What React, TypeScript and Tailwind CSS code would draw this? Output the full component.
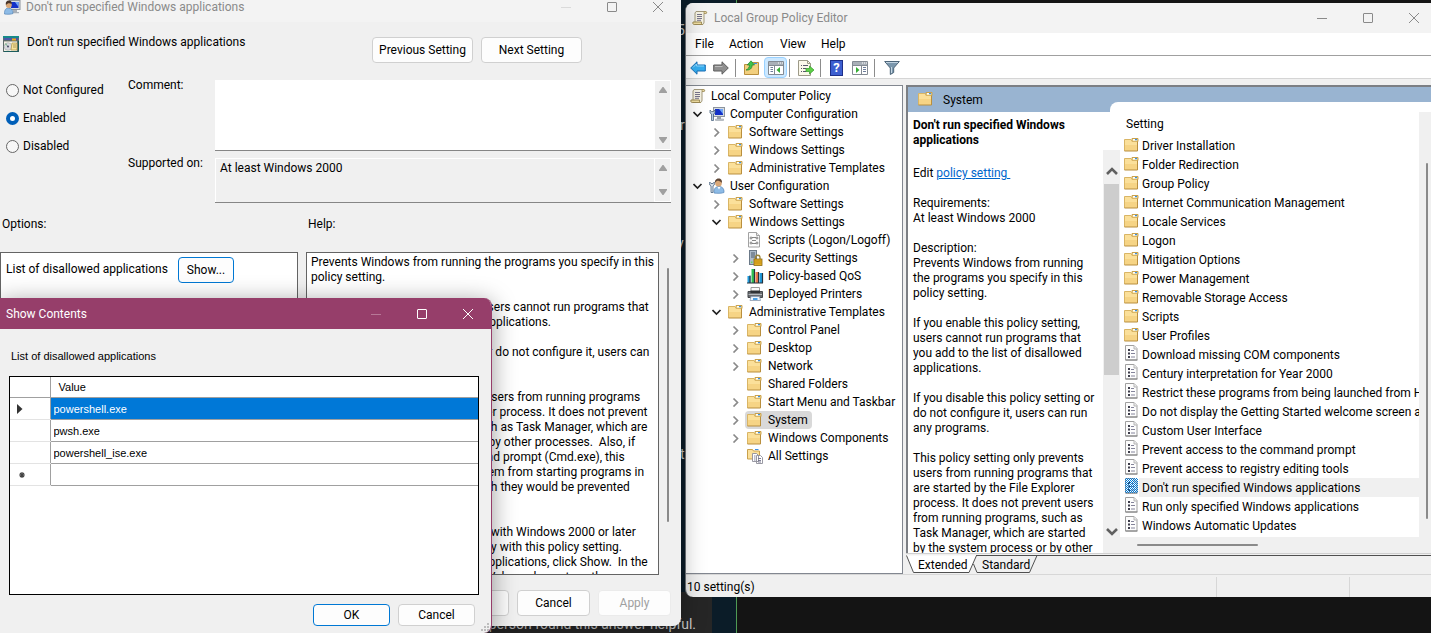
import type { ReactNode } from "react";

type IconProps = { className?: string };

function FolderIcon({ className = "" }: IconProps) {
  return (
    <svg className={`shrink-0 ${className}`} width="15" height="15" viewBox="0 1 15 15" aria-hidden="true">
      <path d="M8 1.500h6v3H8z" fill="#f3d98c" stroke="#c9a14c" strokeWidth="1" />
      <path d="M9 2h4v1.500H9z" fill="#fff" />
      <path d="M11 2h2v1.200h-2z" fill="#3b8ee0" />
      <path d="M.5 2.500h6.500l1 2h5.500v9.500H.5z" fill="#fbe09a" />
      <path d="M.5 8h13v6H.5z" fill="#f3cf7c" opacity=".7" />
      <path d="M.5 14V2.500h6.500l1 2h5.500" fill="none" stroke="#d9b565" />
      <path d="M.5 14h13V4.500" fill="none" stroke="#b98f3e" />
    </svg>
  );
}

function ScrollIcon() {
  return (
    <svg className="shrink-0" width="16" height="16" viewBox="0 0 16 16" aria-hidden="true">
      <path d="M4 1.500h9.500c1.200 0 1.500 2 .2 2H12v8.500c0 1.500-.7 2.500-2 2.500H3V3z" fill="#f5f2e4" stroke="#a39a7c" />
      <path d="M1 12h8.500c-.3 1.400.2 2.500 1 2.500H2.200C.8 14.500.6 13 1 12z" fill="#f1dfa2" stroke="#9c8a55" />
      <path d="M12 1.500h2c1 .3.900 2-.2 2H12z" fill="#e9d9a4" stroke="#9c8a55" strokeWidth=".7" />
      <path d="M5 4.500h5M5 6.500h5M5 8.500h5M5 10.300h4" stroke="#78748c" />
    </svg>
  );
}

function ComputerIcon() {
  return (
    <svg className="shrink-0" width="16" height="16" viewBox="0 0 16 16" aria-hidden="true">
      <rect x="4.500" y="1.500" width="11" height="9" fill="#d7dce2" stroke="#8c949e" />
      <rect x="6" y="3" width="8" height="6" fill="#1230c8" />
      <path d="M10 3h4v5z" fill="#6fa4f5" />
      <path d="M8 11h4v2H8z" fill="#9aa2ab" />
      <path d="M6.500 13h8v1.500h-8z" fill="#c6cbd1" stroke="#8c949e" strokeWidth=".5" />
      <path d="M1 4v3l1.500 1v6.500h2V8L6 7V4L4.500 5.500h-2z" fill="#b9cbe0" stroke="#4d6480" strokeWidth=".8" />
    </svg>
  );
}

function UserIcon() {
  return (
    <svg className="shrink-0" width="16" height="16" viewBox="0 0 16 16" aria-hidden="true">
      <path d="M5 15c-.5-4 1.500-6.500 5-6.500s5.300 2.500 5 6c-2.500 1-7.500 1-10 .5z" fill="#8dbbe6" stroke="#5685b8" strokeWidth=".7" />
      <path d="M8.500 9l1.500 2.500L11.500 9z" fill="#fff" />
      <circle cx="9.500" cy="5.200" r="3.300" fill="#d9a777" />
      <path d="M6 5C5.500 2 7.500.500 9.500.500c2.500 0 4 1.800 3.300 4.500-1-1.500-3-2.500-4-2.200C7.500 3 6.700 3.800 6 5z" fill="#5d4534" />
      <path d="M.7 4v3L2 8v6.500h2V8l1.300-1V4L4 5.500H2z" fill="#d5dfea" stroke="#4d6480" strokeWidth=".8" />
    </svg>
  );
}

function UserComputerIcon() {
  return (
    <svg className="shrink-0" width="17" height="16" viewBox="0 0 17 16" aria-hidden="true">
      <rect x="5.500" y="1.500" width="10.500" height="9" fill="#d7dce2" stroke="#8c949e" />
      <rect x="7" y="3" width="7.500" height="6" fill="#1230c8" />
      <path d="M11 3h3.500v5z" fill="#6fa4f5" />
      <path d="M9 11h4v2H9zM8 13h7v1.200H8z" fill="#a9b0b8" />
      <path d="M.5 15c-.3-4 1.500-6 4-6s4.500 2 4.500 5.500C7 15.400 3 15.400.5 15z" fill="#8dbbe6" stroke="#5685b8" strokeWidth=".7" />
      <circle cx="4.800" cy="6" r="3" fill="#d9a777" />
      <path d="M2 6c-.8-3 .8-4.500 3-4.500S8.300 3.500 7.500 5C5.500 3.500 3.500 4 2 6z" fill="#4a3528" />
    </svg>
  );
}

function ProgramsIcon() {
  return (
    <svg className="shrink-0" width="16" height="16" viewBox="0 0 16 16" aria-hidden="true">
      <rect width="16" height="16" fill="#5f6b6b" />
      <rect width="16" height="2" fill="#168a8a" />
      <rect x="1" y="2" width="14" height="2" fill="#4a58a8" />
      <rect x="9" y="2.500" width="4" height="2" fill="#f0a818" />
      <rect x="1" y="5" width="13" height="10" fill="#f4f1e4" />
      <path d="M1 5.500h13" stroke="#b9b9b0" />
      <circle cx="5" cy="10.500" r="3.800" fill="#d8d8de" stroke="#98a0a0" strokeWidth=".5" />
      <path d="M5 10.500L2 8.500l1-1.500z" fill="#7db88f" />
      <circle cx="5" cy="10.500" r="1" fill="#474b66" />
      <path d="M9 7h5v7H8z" fill="#f8e29b" stroke="#ad9345" strokeWidth=".7" />
      <path d="M10 9h3M10 11h3" stroke="#9d8a4b" strokeWidth=".8" />
      <path d="M15.500 5v10.500H1" fill="none" stroke="#1c5d5d" />
    </svg>
  );
}

function ScriptIcon() {
  return (
    <svg className="shrink-0" width="16" height="16" viewBox="0 0 16 16" aria-hidden="true">
      <path d="M1.500.500h8l3 3v11.500h-11z" fill="#fcfcfc" stroke="#a2a2a2" />
      <path d="M9.500.500v3h3" fill="#e8e8e8" stroke="#a2a2a2" />
      <path d="M5 5.500h4M5 8.500h4M5 11.500h4" fill="none" stroke="#888" />
      <circle cx="4" cy="6" r="1" fill="none" stroke="#666" strokeWidth=".8" />
      <circle cx="10" cy="6" r="1" fill="none" stroke="#666" strokeWidth=".8" />
      <circle cx="4" cy="11" r="1" fill="none" stroke="#666" strokeWidth=".8" />
      <circle cx="10" cy="11" r="1" fill="none" stroke="#666" strokeWidth=".8" />
    </svg>
  );
}

function SecurityIcon() {
  return (
    <svg className="shrink-0" width="16" height="16" viewBox="0 0 16 16" aria-hidden="true">
      <rect x="2.500" y=".500" width="7" height="14" fill="#aebccb" stroke="#6b7988" />
      <path d="M4 3h4M4 5h4M4 7h4" stroke="#4c5a6a" />
      <rect x="4" y="11.500" width="1.500" height="1.500" fill="#62d862" />
      <path d="M8.500 9V7.500a2.200 2.200 0 0 1 4.500 0V9" fill="none" stroke="#98833c" strokeWidth="1.300" />
      <rect x="7" y="9" width="8" height="6.500" fill="#e2ad25" stroke="#8c6a14" strokeWidth=".8" />
      <path d="M7.500 11h7M7.500 13h7" stroke="#b8860b" strokeWidth=".7" />
    </svg>
  );
}

function QosIcon() {
  return (
    <svg className="shrink-0" width="17" height="16" viewBox="0 0 17 16" aria-hidden="true">
      <path d="M.5 8h3v7h-3zM12.500 5h3v10h-3z" fill="#1f9bdd" />
      <path d="M4.500 1h3.500v14H4.500z" fill="#2fbf52" />
      <path d="M8.500 4h3.500v11H8.500z" fill="#ef7b4d" />
      <path d="M3 7.500V15M7.500 1v14M11.500 4v11M15.500 5v10M0 15h16" stroke="#26323c" strokeWidth="1.200" />
    </svg>
  );
}

function PrinterIcon() {
  return (
    <svg className="shrink-0" width="17" height="16" viewBox="0 0 17 16" aria-hidden="true">
      <path d="M4 1.500h8.500V6H4z" fill="#fafafa" stroke="#9c9c9c" />
      <path d="M1 5.500h14.500v6H1z" fill="#696c70" stroke="#45484c" />
      <path d="M3.500 4.500H13V7H3.500z" fill="#2f3235" />
      <path d="M1.500 8.500h13.500" stroke="#b4b8bc" />
      <path d="M4 10.500h8.500l1 4H3z" fill="#eef6fd" stroke="#8c9bb0" strokeWidth=".8" />
      <path d="M6 12h4.500v2H6z" fill="#4aa0e6" />
    </svg>
  );
}

function AllSettingsIcon() {
  return (
    <svg className="shrink-0" width="17" height="16" viewBox="0 0 17 16" aria-hidden="true">
      <path d="M.5 1.500h5l1 1.500h6v8H.5z" fill="#fbe09a" stroke="#c9a14c" />
      <path d="M8 1.500h3.500" stroke="#3b8ee0" />
      <path d="M5.500 5.500h4l2 2v6h-6zM9.500 7.500h4l2 2v6h-6z" fill="#fff" stroke="#8e8e9a" strokeWidth=".9" />
      <path d="M11 10.500h3M11 12.500h3M11 14h3M7 8h1.500M7 10h1.500M7 12h1.500" stroke="#70718a" strokeWidth=".9" />
    </svg>
  );
}

function PolicyIcon({ selected = false }: { selected?: boolean }) {
  return (
    <svg className="shrink-0" width="14" height="16" viewBox="0 0 14 16" aria-hidden="true">
      <path d="M1.500.500h8.500l3 3v11.500H1.500z" fill="#fdfdfd" stroke="#a0a0a0" />
      <path d="M10 .500V4h3" fill="#eee" stroke="#b5b5b5" />
      <path d="M1.500 15H13.500" stroke="#7d7d7d" />
      <path d="M4 4h2v2H4zM4 7.500h2v2H4zM4 11h2v2H4z" fill="#3d3d4a" />
      <path d="M7 5.500h3M7 8.500h4M7 12h4" stroke="#84849a" />
      {selected && (
        <>
          <defs>
            <pattern id="dither" width="2" height="2" patternUnits="userSpaceOnUse">
              <path d="M0 0h1v1H0zM1 1h1v1H1z" fill="#0078d7" shapeRendering="crispEdges" />
            </pattern>
          </defs>
          <rect x="1" width="13" height="15" fill="url(#dither)" />
        </>
      )}
    </svg>
  );
}

function Chevron({ open }: { open: boolean }) {
  return open ? (
    <svg width="10" height="10" viewBox="0 0 10 10" aria-hidden="true">
      <path d="M.5 3l4 4 4-4" fill="none" stroke="#222" strokeWidth="1.700" />
    </svg>
  ) : (
    <svg width="10" height="10" viewBox="0 0 10 10" aria-hidden="true">
      <path d="M2.500 1.500l4 4-4 4" fill="none" stroke="#8a8a8a" strokeWidth="1.700" />
    </svg>
  );
}

function CaptionButtons({ stroke, faint }: { stroke: string; faint: string }) {
  return (
    <div className="flex">
      <button aria-label="Minimize" className="flex w-[46px] items-center justify-center">
        <svg width="10" height="10" viewBox="0 0 10 10"><path d="M0 5.500h10" stroke={faint} /></svg>
      </button>
      <button aria-label="Maximize" className="flex w-[46px] items-center justify-center">
        <svg width="10" height="10" viewBox="0 0 10 10"><rect x=".5" y=".5" width="9" height="9" rx=".5" fill="none" stroke={stroke} /></svg>
      </button>
      <button aria-label="Close" className="flex w-[46px] items-center justify-center">
        <svg width="10" height="10" viewBox="0 0 10 10"><path d="M0 0l10 10M10 0L0 10" stroke={stroke} /></svg>
      </button>
    </div>
  );
}

function PushButton({ children, className = "", ...rest }: { children: ReactNode; className?: string; disabled?: boolean }) {
  return (
    <button {...rest} className={`rounded border bg-[#fdfdfd] text-center ${className}`}>
      {children}
    </button>
  );
}

function ScrollStrip() {
  return (
    <div className="flex w-[17px] shrink-0 flex-col items-center justify-between border border-white bg-[#f0f0f0] py-1.5">
      <svg width="8" height="6" viewBox="0 0 8 6" aria-hidden="true"><path d="M3.500 0h1L8 5v1H0V5z" fill="#a0a0a0" /></svg>
      <svg width="8" height="6" viewBox="0 0 8 6" aria-hidden="true"><path d="M3.500 6h1L8 1V0H0v1z" fill="#a0a0a0" /></svg>
    </div>
  );
}

type Node = { label: string; level: number; icon: ReactNode; open?: boolean; selected?: boolean };

const tree: Node[] = [
  { label: "Computer Configuration", level: 0, icon: <ComputerIcon />, open: true },
  { label: "Software Settings", level: 1, icon: <FolderIcon />, open: false },
  { label: "Windows Settings", level: 1, icon: <FolderIcon />, open: false },
  { label: "Administrative Templates", level: 1, icon: <FolderIcon />, open: false },
  { label: "User Configuration", level: 0, icon: <UserIcon />, open: true },
  { label: "Software Settings", level: 1, icon: <FolderIcon />, open: false },
  { label: "Windows Settings", level: 1, icon: <FolderIcon />, open: true },
  { label: "Scripts (Logon/Logoff)", level: 2, icon: <ScriptIcon /> },
  { label: "Security Settings", level: 2, icon: <SecurityIcon />, open: false },
  { label: "Policy-based QoS", level: 2, icon: <QosIcon />, open: false },
  { label: "Deployed Printers", level: 2, icon: <PrinterIcon />, open: false },
  { label: "Administrative Templates", level: 1, icon: <FolderIcon />, open: true },
  { label: "Control Panel", level: 2, icon: <FolderIcon />, open: false },
  { label: "Desktop", level: 2, icon: <FolderIcon />, open: false },
  { label: "Network", level: 2, icon: <FolderIcon />, open: false },
  { label: "Shared Folders", level: 2, icon: <FolderIcon /> },
  { label: "Start Menu and Taskbar", level: 2, icon: <FolderIcon />, open: false },
  { label: "System", level: 2, icon: <FolderIcon />, open: false, selected: true },
  { label: "Windows Components", level: 2, icon: <FolderIcon />, open: false },
  { label: "All Settings", level: 2, icon: <AllSettingsIcon /> },
];

const indent = ["pl-[7px]", "pl-[26px]", "pl-[45px]"];

const folders = [
  "Driver Installation",
  "Folder Redirection",
  "Group Policy",
  "Internet Communication Management",
  "Locale Services",
  "Logon",
  "Mitigation Options",
  "Power Management",
  "Removable Storage Access",
  "Scripts",
  "User Profiles",
];

const policies = [
  "Download missing COM components",
  "Century interpretation for Year 2000",
  "Restrict these programs from being launched from Help",
  "Do not display the Getting Started welcome screen at logon",
  "Custom User Interface",
  "Prevent access to the command prompt",
  "Prevent access to registry editing tools",
  "Don't run specified Windows applications",
  "Run only specified Windows applications",
  "Windows Automatic Updates",
];

const help = [
  "Prevents Windows from running the programs you specify in this",
  "policy setting.",
  "",
  "If you enable this policy setting, users cannot run programs that",
  "you add to the list of disallowed applications.",
  "",
  "If you disable this policy setting or do not configure it, users can",
  "run any programs.",
  "",
  "This policy setting only prevents users from running programs",
  "that are started by the File Explorer process. It does not prevent",
  "users from running programs, such as Task Manager, which are",
  "started by the system process or by other processes.  Also, if",
  "users have access to the command prompt (Cmd.exe), this",
  "policy setting does not prevent them from starting programs in",
  "the command window even though they would be prevented",
  "from doing so in File Explorer.",
  "",
  "Note: Non-Microsoft applications with Windows 2000 or later",
  "certification are required to comply with this policy setting.",
  "Note: To create a list of allowed applications, click Show.  In the",
  "Show Contents dialog box, in the Value column, type the",
].join("\n");

const description = [
  "Requirements:",
  "At least Windows 2000",
  "",
  "Description:",
  "Prevents Windows from running",
  "the programs you specify in this",
  "policy setting.",
  "",
  "If you enable this policy setting,",
  "users cannot run programs that",
  "you add to the list of disallowed",
  "applications.",
  "",
  "If you disable this policy setting or",
  "do not configure it, users can run",
  "any programs.",
  "",
  "This policy setting only prevents",
  "users from running programs that",
  "are started by the File Explorer",
  "process. It does not prevent users",
  "from running programs, such as",
  "Task Manager, which are started",
  "by the system process or by other",
].join("\n");

function Separator() {
  return <span className="h-[18px] w-px bg-[#8c8c8c]" />;
}

function Toolbar() {
  return (
    <div className="flex h-[23px] shrink-0 items-center border-b border-[#d5d5d5] bg-white pl-1 pt-px">
      <button aria-label="Back" className="w-[23px]">
        <svg width="16" height="14" viewBox="0 0 16 14"><path d="M.7 7L7 .8V4h8.300v6H7v3.200z" fill="#35aef0" stroke="#1a6fb5" /><path d="M3 6.500L6.500 3v2H14" fill="none" stroke="#8fd6fb" /></svg>
      </button>
      <button aria-label="Forward" className="w-[22px]">
        <svg width="16" height="14" viewBox="0 0 16 14"><path d="M15.300 7L9 .8V4H.7v6H9v3.200z" fill="#8f8f8f" stroke="#5c5c5c" /><path d="M2 5.500h7.500" stroke="#bdbdbd" /></svg>
      </button>
      <Separator />
      <button aria-label="Up one level" className="ml-2 w-[20px]">
        <svg width="15" height="16" viewBox="0 0 15 16"><path d="M.5 4.500h7l1-2h6v12H.5z" fill="#f2cf7e" stroke="#b98f3e" /><path d="M10 3.500h3" stroke="#3b8ee0" /><path d="M2 10c2-1 3.500-2.500 3.500-5H3.200L7 .8 10.500 5H8.200c0 3.500-2.500 5.500-6.200 5z" fill="#3fc24a" stroke="#23842c" strokeWidth=".7" /></svg>
      </button>
      <button aria-label="Show or hide console tree" className="flex h-[21px] w-[23px] items-center justify-center rounded-sm border border-[#99d1ff] bg-[#cce8ff]">
        <svg width="16" height="14" viewBox="0 0 16 14"><path d="M.5.500h15v13H.5z" fill="#fff" stroke="#838a93" /><path d="M1 1h14v3H1z" fill="#a9b0b8" /><path d="M10 2h1M12 2h1M14 2h1" stroke="#fff" /><path d="M6.500 4v9M1 4.500h14" stroke="#838a93" /><path d="M2.500 6.500h2.500M2.500 8.500h2.500M2.500 10.500h2.500" stroke="#6d7d9b" /><path d="M12 6v6L8.500 9z" fill="#35ad35" /></svg>
      </button>
      <span className="w-[2px]" />
      <Separator />
      <button aria-label="Export list" className="ml-2 w-[22px]">
        <svg width="17" height="16" viewBox="0 0 17 16"><path d="M.5.500h9l3 3v12H.5z" fill="#fbf8ea" stroke="#9d9a88" /><path d="M9.500.500v3h3" fill="none" stroke="#9d9a88" /><path d="M3 5.500h1M5 5.500h5M3 8.500h1M5 8.500h3M3 11.500h1M5 11.500h3" stroke="#56566a" /><path d="M8 8.500h3.500V6L16 10l-4.500 4v-2.500H8z" fill="#5fd048" stroke="#2f9a26" strokeWidth=".7" /></svg>
      </button>
      <Separator />
      <button aria-label="Help" className="ml-[9px] flex h-[16px] w-[13px] items-center justify-center border border-[#1d2f8a] bg-[#3d5fd0] text-[13px] font-bold leading-[14px] text-white">
        ?
      </button>
      <button aria-label="Show or hide action pane" className="ml-[9px] w-[22px]">
        <svg width="16" height="14" viewBox="0 0 16 14"><path d="M.5.500h15v13H.5z" fill="#fff" stroke="#838a93" /><path d="M1 1h14v3H1z" fill="#a9b0b8" /><path d="M10 2h1M12 2h1M14 2h1" stroke="#fff" /><path d="M9.500 4v9M1 4.500h14" stroke="#838a93" /><path d="M11 6.500h3M11 8.500h3M11 10.500h3" stroke="#6d7d9b" /><path d="M4 6v6l3.500-3z" fill="#35ad35" /></svg>
      </button>
      <Separator />
      <button aria-label="Filter" className="ml-[9px]">
        <svg width="16" height="15" viewBox="0 0 16 15"><path d="M.7 1.500h14.600L9.700 8v4.500L6.300 14.500V8z" fill="#7b97ad" stroke="#4c6478" /><path d="M2 2.500h12" stroke="#c0d2e0" /><path d="M7.500 7v6" stroke="#c7d8e5" /></svg>
      </button>
    </div>
  );
}

function PolicyEditorWindow() {
  return (
    <section aria-label="Local Group Policy Editor" className="absolute bottom-9 left-[685px] right-0 top-[3px] flex flex-col overflow-hidden rounded-l-lg border-l border-[#70757a] bg-[#f0f0f0]">
      <header className="flex h-[30px] shrink-0 justify-between bg-[#f3f3f3]">
        <div className="flex items-center gap-1.5 pl-1.5 text-[#8a8a8a]">
          <ScrollIcon />
          <h1>Local Group Policy Editor</h1>
        </div>
        <div className="-mr-1.5 flex">
          <CaptionButtons stroke="#8a8a8a" faint="#8a8a8a" />
        </div>
      </header>
      <nav className="flex h-[23px] shrink-0 items-center border-b border-[#a0a0a0] bg-white pl-[9px]">
        <button className="w-[34px] text-left">File</button>
        <button className="w-[51px] text-left">Action</button>
        <button className="w-[41px] text-left">View</button>
        <button>Help</button>
      </nav>
      <Toolbar />
      <div className="mt-1.5 flex min-h-0 flex-1 gap-[3px]">
        <ul role="tree" aria-label="Console tree" className="w-[217px] shrink-0 overflow-hidden border border-l-0 border-[#828790] bg-white pt-px">
          <li role="treeitem" className="flex h-[18px] items-center gap-[5px] pl-1">
            <ScrollIcon />
            Local Computer Policy
          </li>
          {tree.map((n, i) => (
            <li key={i} role="treeitem" aria-expanded={n.open} aria-selected={!!n.selected} className={`flex h-[18px] items-center whitespace-nowrap ${indent[n.level]}`}>
              <span className="flex w-[14px] shrink-0">{n.open !== undefined && <Chevron open={n.open} />}</span>
              <span className={`flex h-[18px] items-center rounded-sm pl-0.5 pr-1 ${n.selected ? "bg-[#d9d9d9]" : ""}`}>
                <span className="flex w-[19px] shrink-0">{n.icon}</span>
                <span className="pl-0.5">{n.label}</span>
              </span>
            </li>
          ))}
        </ul>
        <div className="flex min-w-0 flex-1 flex-col">
          <div className="flex min-h-0 flex-1 flex-col border-l-2 border-t-2 border-[#7c7f84] bg-white">
            <div className="flex h-[25px] shrink-0 bg-[#99b4d1]">
              <div className="flex w-[202px] shrink-0 items-center gap-[10px] pl-[10px]">
                <FolderIcon />
                <h2>System</h2>
              </div>
              <div className="mt-[15px] flex-1 rounded-tl-lg bg-white" />
            </div>
            <div className="flex min-h-0 flex-1">
              <div className="w-[195px] shrink-0 overflow-hidden whitespace-pre pl-[5px] pt-[6px] leading-[15px]">
                <h3 className="font-bold">{"Don't run specified Windows\napplications"}</h3>
                <p className="mb-[15px] mt-[18px]">
                  Edit <a href="#policy" className="text-[#0066cc] underline">policy setting </a>
                </p>
                <p>{description}</p>
              </div>
              <div className="mt-[38px] flex w-[17px] shrink-0 flex-col items-center bg-[#f0f0f0]">
                <svg className="mt-4" width="12" height="10" viewBox="0 0 12 10" aria-hidden="true"><path d="M1 8l5-5 5 5" fill="none" stroke="#606060" strokeWidth="2.600" /></svg>
                <div className="mt-2 h-[191px] w-[15px] bg-[#cdcdcd]" />
                <div className="flex-1" />
                <svg className="mb-4" width="12" height="10" viewBox="0 0 12 10" aria-hidden="true"><path d="M1 2l5 5 5-5" fill="none" stroke="#606060" strokeWidth="2.600" /></svg>
              </div>
              <div className="flex min-w-0 flex-1 flex-col">
                <div className="min-h-0 flex-1 overflow-hidden pl-1">
                  <table className="w-full table-fixed border-collapse whitespace-nowrap text-left">
                    <thead>
                      <tr>
                        <th className="h-6 pl-0.5 font-normal">Setting</th>
                      </tr>
                    </thead>
                    <tbody>
                      {folders.map((f) => (
                        <tr key={f}>
                          <td className="h-[19px] p-0">
                            <span className="flex h-[19px] items-center gap-[3px]"><FolderIcon /> {f}</span>
                          </td>
                        </tr>
                      ))}
                      {policies.map((p, i) => (
                        <tr key={p} aria-selected={i === 7}>
                          <td className="h-[19px] p-0">
                            <span className="flex h-[19px] gap-px">
                              <PolicyIcon selected={i === 7} />
                              <span className={`flex h-[19px] min-w-0 flex-1 items-center overflow-hidden pl-[3px] ${i === 7 ? "bg-[#f0f0f0]" : ""}`}>{p}</span>
                            </span>
                          </td>
                        </tr>
                      ))}
                    </tbody>
                  </table>
                </div>
                <div className="h-4 shrink-0 bg-[#f0f0f0] pl-[17px] pt-[7px]">
                  <div className="h-0.5 w-[121px] rounded bg-[#8a8a8a]" />
                </div>
              </div>
              <div className="flex w-[12px] shrink-0 flex-col bg-[#f0f0f0] pb-[34px] pl-[7px] pt-[51px]">
                <div className="w-0.5 flex-1 rounded bg-[#8a8a8a]" />
              </div>
            </div>
          </div>
          <div className="flex h-[21px] shrink-0 border-t border-[#d0d0d0] pt-px">
            <svg className="absolute" width="136" height="19" viewBox="0 0 136 19" aria-hidden="true">
              <path d="M0 .5L7.500 18H63L70.500.5z" fill="#fff" />
              <path d="M.5.500L7.500 17.500H63L70.500.500M67.500 9L71 17.500h52.500L131 .500" fill="none" stroke="#505050" />
              <path d="M70 .500h66" stroke="#505050" />
            </svg>
            <div role="tablist" className="relative flex flex-1 pl-3 leading-5">
              <button role="tab" aria-selected="true" className="w-16 text-left">Extended</button>
              <button role="tab" aria-selected="false" className="w-[60px] text-left">Standard</button>
              <div className="h-px flex-1 bg-[#505050]" />
            </div>
          </div>
        </div>
      </div>
      <footer className="flex h-[23px] shrink-0 items-center border-t border-[#d7d7d7] pt-px">
        <span className="flex-1 pl-px">10 setting(s)</span>
        <span className="h-5 w-[133px] border-l border-[#d7d7d7]" />
        <span className="h-5 w-[82px] border-l border-[#d7d7d7]" />
      </footer>
    </section>
  );
}

function PolicySettingWindow() {
  return (
    <section aria-label="Policy setting" className="absolute bottom-[7px] left-0 top-0 flex w-[681px] flex-col overflow-hidden rounded-br-lg bg-[#f0f0f0] shadow-[0_4px_24px_rgba(0,0,0,0.35)]">
      <header className="flex h-[22px] shrink-0 items-start justify-between bg-[#f3f3f3] text-[#8a8a8a]">
        <div className="flex h-[13px] items-center gap-[5px] pl-1">
          <UserComputerIcon />
          <h1>Don't run specified Windows applications</h1>
        </div>
        <div className="flex h-[13px]">
          <CaptionButtons stroke="#8a8a8a" faint="#dadada" />
        </div>
      </header>
      <div className="flex h-[54px] shrink-0">
        <div className="flex w-[372px] gap-2 pl-[3px] pt-3">
          <span className="pt-0.5"><ProgramsIcon /></span>
          <h2 className="leading-4">Don't run specified Windows applications</h2>
        </div>
        <div className="flex gap-2 pt-[15px]">
          <PushButton className="h-[26px] w-[101px] border-[#d0d0d0]">Previous Setting</PushButton>
          <PushButton className="h-[26px] w-[101px] border-[#d0d0d0]">Next Setting</PushButton>
        </div>
      </div>
      <div className="flex shrink-0 pr-2.5">
        <fieldset className="w-32 shrink-0 pl-1.5">
          {["Not Configured", "Enabled", "Disabled"].map((label) => (
            <label key={label} className="flex h-7 items-center gap-1">
              <input
                type="radio"
                name="state"
                defaultChecked={label === "Enabled"}
                className="size-[13px] appearance-none rounded-full border border-[#666] bg-[#f7f7f7] checked:border-4 checked:border-[#005fb8] checked:bg-white"
              />
              {label}
            </label>
          ))}
        </fieldset>
        <div className="flex flex-1 flex-col gap-[7px] pt-1">
          <div className="flex h-[71px]">
            <label htmlFor="comment" className="w-[87px] leading-[10px]">Comment:</label>
            <div className="flex flex-1 border-b border-[#868686] bg-white">
              <textarea id="comment" className="flex-1 resize-none px-[5px] outline-none" />
              <ScrollStrip />
            </div>
          </div>
          <div className="flex h-[45px]">
            <label htmlFor="supported" className="w-[87px] leading-[10px]">Supported on:</label>
            <div className="flex flex-1 border-b border-[#868686]">
              <textarea id="supported" readOnly defaultValue="At least Windows 2000" className="flex-1 resize-none overflow-hidden border-l border-t border-white px-1 pt-0.5 leading-[15px] outline-none" />
              <ScrollStrip />
            </div>
          </div>
        </div>
      </div>
      <div className="flex h-[49px] shrink-0 pt-[13px] leading-4">
        <span className="w-[306px] pl-0.5">Options:</span>
        <span className="pl-0.5">Help:</span>
      </div>
      <div className="flex min-h-0 flex-1 gap-2">
        <div className="flex w-[298px] shrink-0 items-start justify-between border border-[#646464] bg-white pl-[5px] pr-[63px] pt-1">
          <span className="pt-1 leading-4">List of disallowed applications</span>
          <PushButton className="h-[26px] w-[56px] border-[#0078d4]">Show...</PushButton>
        </div>
        <div className="w-[353px] shrink-0 overflow-hidden whitespace-pre border border-[#646464] bg-white pl-1 pt-0.5 leading-[15px]">
          {help}
        </div>
        <div className="flex w-[2px] flex-col pb-[53px] pt-4">
          <div className="flex-1 rounded bg-[#8a8a8a]" />
        </div>
      </div>
      <div className="flex shrink-0 justify-end gap-2 pb-2.5 pr-2.5 pt-[15px]">
        <PushButton className="h-[26px] w-[73px] border-[#d0d0d0]">OK</PushButton>
        <PushButton className="h-[26px] w-[73px] border-[#d0d0d0]">Cancel</PushButton>
        <PushButton disabled className="h-[26px] w-[73px] border-[#ebebeb] text-[#a0a0a0]">Apply</PushButton>
      </div>
    </section>
  );
}

function ShowContentsDialog() {
  const rows = ["powershell.exe", "pwsh.exe", "powershell_ise.exe", ""];
  return (
    <section role="dialog" aria-label="Show Contents" className="absolute bottom-0 left-0 top-[298px] flex w-[492px] flex-col overflow-hidden rounded-br-lg rounded-tr-lg border-r border-[#963e6a] bg-[#f0f0f0] font-['Liberation_Sans',sans-serif] text-[11px] shadow-[0_4px_24px_rgba(0,0,0,0.4)]">
      <header className="flex h-[31px] shrink-0 justify-between bg-[#963e6a] font-['Roboto',sans-serif] text-[12px] text-white">
        <h2 className="flex items-center pl-1.5">Show Contents</h2>
        <CaptionButtons stroke="#fff" faint="#b77897" />
      </header>
      <p className="shrink-0 pb-[13px] pl-[11px] pt-5 leading-[14px]">List of disallowed applications</p>
      <div className="ml-[9px] mr-3 flex-1 border border-black bg-white">
        <table className="w-full table-fixed border-collapse text-left">
          <colgroup>
            <col className="w-[40px]" />
            <col />
          </colgroup>
          <thead>
            <tr>
              <th className="h-5 border-b border-r border-[#a0a0a0] p-0"></th>
              <th className="h-5 border-b border-[#a0a0a0] p-0 pl-2 pt-px font-normal">Value</th>
            </tr>
          </thead>
          <tbody>
            {rows.map((r, i) => (
              <tr key={i}>
                <td className="h-[22px] border-b border-r border-b-[#e3e3e3] border-r-[#a0a0a0] p-0 pl-[7px] pt-px">
                  {i === 0 && <svg width="6" height="10" viewBox="0 0 6 10" aria-hidden="true"><path d="M0 0l5.500 5L0 10z" fill="#333" /></svg>}
                  {i === 3 && <svg className="ml-0.5" width="6" height="6" viewBox="0 0 6 6" aria-hidden="true"><path d="M3 0v6M0 3h6M1 1l4 4M5 1L1 5" stroke="#444" strokeWidth="1.200" /></svg>}
                </td>
                <td className="h-[22px] border-b border-[#a0a0a0] p-0">
                  <input
                    aria-label={`Value ${i + 1}`}
                    defaultValue={r}
                    className={`block h-[21px] w-full pl-[3px] pt-0.5 outline-none ${i === 0 ? "bg-[#0078d7] text-white" : "bg-white"}`}
                  />
                </td>
              </tr>
            ))}
          </tbody>
        </table>
      </div>
      <div className="flex shrink-0 justify-end gap-2 pb-[7px] pr-4 pt-[9px] font-['Roboto',sans-serif] text-[12px]">
        <PushButton className="h-[22px] w-[77px] border-[#0078d4]">OK</PushButton>
        <PushButton className="h-[22px] w-[77px] border-[#d0d0d0]">Cancel</PushButton>
      </div>
      <svg className="absolute bottom-0 right-0" width="11" height="10" viewBox="0 0 11 10" aria-hidden="true">
        <path d="M7 0h2v2H7zM4 3h2v2H4zM7 3h2v2H7zM1 6h2v2H1zM4 6h2v2H4zM7 6h2v2H7z" fill="#bdbdbd" />
      </svg>
    </section>
  );
}

export default function App() {
  return (
    <main className="relative h-screen overflow-hidden bg-[#141414] font-['Roboto',sans-serif] text-[12px] leading-4 text-black">
      <div className="absolute inset-y-0 left-0 w-[737px] border-r border-[#4f9a55] bg-[#0b1c28] text-[14px] text-[#c8c8c8]">
        <span className="absolute left-[677px] top-[22px]">5</span>
        <span className="absolute left-[680px] top-[117px]">r</span>
        <span className="absolute left-[677px] top-[235px]">y</span>
        <span className="absolute left-[680px] top-[446px]">t</span>
        <div className="absolute bottom-0 left-0 flex h-[41px] w-[712px] items-end justify-end bg-[#262626] pr-4 leading-[18px]">
          1 person found this answer helpful.
        </div>
      </div>
      <PolicyEditorWindow />
      <PolicySettingWindow />
      <ShowContentsDialog />
    </main>
  );
}
